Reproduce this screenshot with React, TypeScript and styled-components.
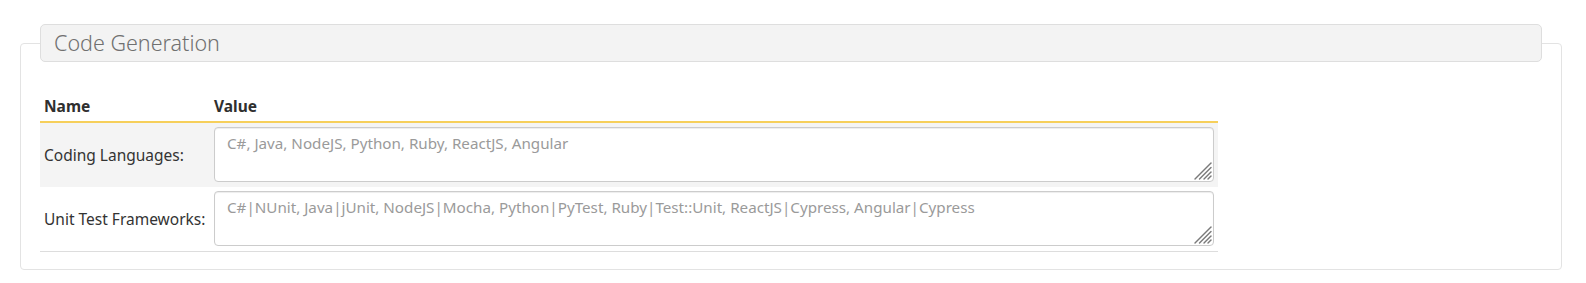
import React from "react";
import styled, { createGlobalStyle } from "styled-components";

const Global = createGlobalStyle`
  html, body { margin: 0; padding: 0; background: #ffffff; }
  body { font-family: "Noto Sans", "Open Sans", Arial, sans-serif; color: #333; }
  * { box-sizing: border-box; }
`;

const Page = styled.div`
  padding: 24px 24px 15px 20px;
`;

const Panel = styled.fieldset`
  margin: 0;
  border: 1px solid #e3e3e3;
  border-radius: 4px;
  padding: 0 19px 17px 19px;
  min-width: 0;
`;

const Title = styled.legend`
  width: 100%;
  padding: 0 13px;
  margin: 0;
  height: 38px;
  line-height: 36px;
  background: #f3f3f3;
  border: 1px solid #dedede;
  border-radius: 5px;
  font-size: 21.5px;
  font-weight: 300;
  color: #707070;
`;

const Table = styled.table`
  width: 1178px;
  margin-top: 30px;
  border-collapse: collapse;
  font-size: 15.5px;
`;

const HeadCell = styled.th<{ $w?: number }>`
  text-align: left;
  font-weight: 700;
  color: #2f2f2f;
  padding: 4px 4px 5px;
  width: ${(p) => (p.$w ? `${p.$w}px` : "auto")};
  border-bottom: 2px solid #f6cf5a;
  line-height: 20px;
`;

const Row = styled.tr<{ $shaded?: boolean }>`
  background: ${(p) => (p.$shaded ? "#f4f4f4" : "#ffffff")};
  border-bottom: ${(p) => (p.$shaded ? "none" : "1px solid #dddddd")};
`;

const LabelCell = styled.td`
  padding: 4px 4px;
  vertical-align: middle;
  color: #333;
  white-space: nowrap;
`;

const ValueCell = styled.td`
  padding: 4px 4px 5px;
  vertical-align: middle;
`;

const AreaWrap = styled.div`
  position: relative;
`;

const Area = styled.textarea`
  display: block;
  width: 100%;
  height: 55px;
  border: 1px solid #cccccc;
  border-radius: 4px;
  box-shadow: inset 0 1px 1px rgba(0, 0, 0, 0.075);
  padding: 5px 12px;
  font-family: inherit;
  font-size: 15.2px;
  line-height: 20px;
  color: #555;
  background: #fff;
  resize: none;
  outline: none;
  &::placeholder { color: #9a9a9a; }
`;

const Grip = styled.svg`
  position: absolute;
  right: 2px;
  bottom: 2px;
  width: 18px;
  height: 18px;
  pointer-events: none;
`;

const ResizeGrip = () => (
  <Grip viewBox="0 0 18 18">
    <g stroke="#7a7a7a" strokeWidth="1.4" strokeLinecap="round">
      <line x1="17" y1="1" x2="1" y2="17" />
      <line x1="17" y1="5.5" x2="5.5" y2="17" />
      <line x1="17" y1="10" x2="10" y2="17" />
      <line x1="17" y1="14" x2="14" y2="17" />
    </g>
  </Grip>
);

const rows = [
  { name: "Coding Languages:", value: "C#, Java, NodeJS, Python, Ruby, ReactJS, Angular" },
  {
    name: "Unit Test Frameworks:",
    value:
      "C#|NUnit, Java|jUnit, NodeJS|Mocha, Python|PyTest, Ruby|Test::Unit, ReactJS|Cypress, Angular|Cypress",
  },
];

export default function App() {
  return (
    <Page>
      <Global />
      <Panel>
        <Title>Code Generation</Title>
        <Table>
          <thead>
            <tr>
              <HeadCell $w={170}>Name</HeadCell>
              <HeadCell>Value</HeadCell>
            </tr>
          </thead>
          <tbody>
            {rows.map((r, i) => (
              <Row key={r.name} $shaded={i % 2 === 0}>
                <LabelCell>{r.name}</LabelCell>
                <ValueCell>
                  <AreaWrap>
                    <Area placeholder={r.value} />
                    <ResizeGrip />
                  </AreaWrap>
                </ValueCell>
              </Row>
            ))}
          </tbody>
        </Table>
      </Panel>
    </Page>
  );
}
